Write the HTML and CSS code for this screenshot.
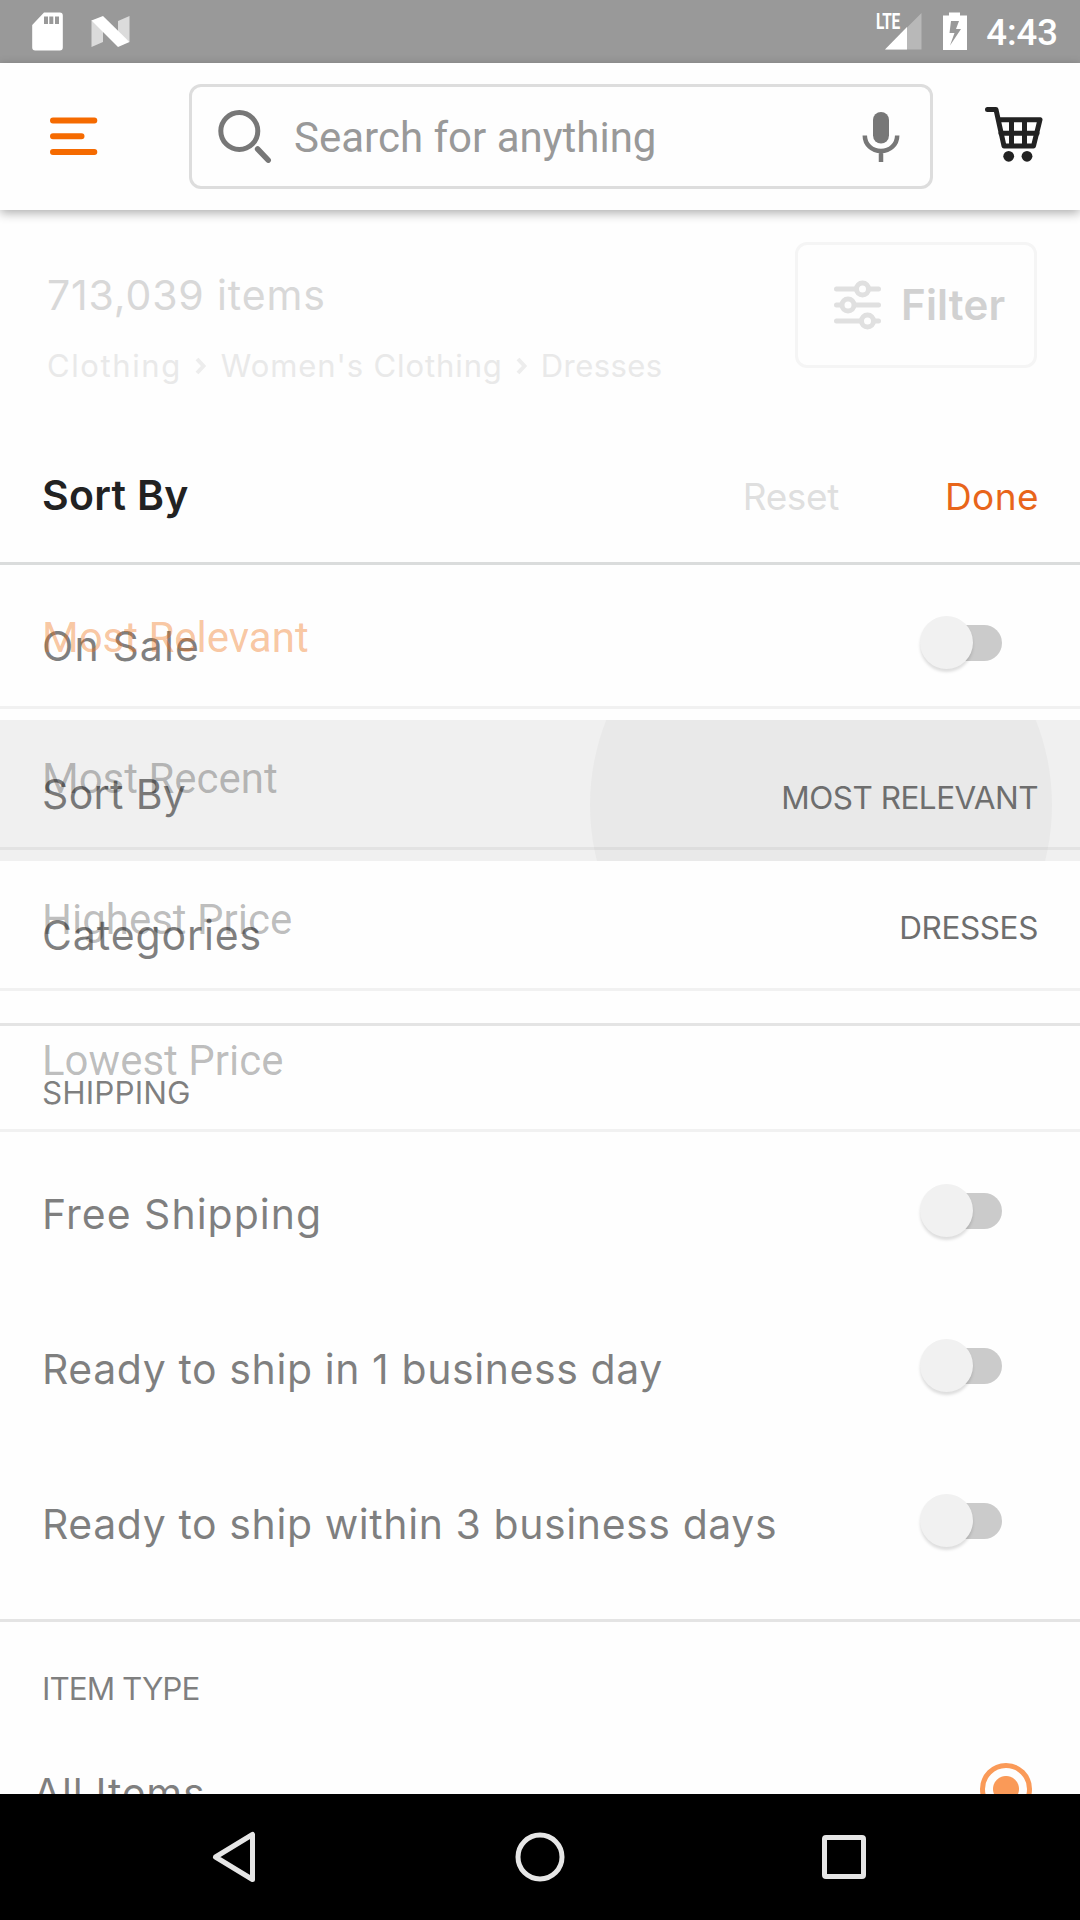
FILE: index.html
```html
<!DOCTYPE html>
<html lang="en">
<head>
<meta charset="utf-8">
<title>Dresses</title>
<link rel="stylesheet" href="styles.css">
</head>
<body>
<div class="phone">
  <div class="status-bar">
    <svg class="status-left" width="110" height="63" viewBox="0 0 110 63">
      <path fill="#fff" fill-rule="evenodd" d="M14 12.500h15.800a3 3 0 0 1 3 3v32a3 3 0 0 1-3 3h-24.600a3 3 0 0 1-3-3V25zM14 16.500v7.500h4v-7.500zM19.300 16.500v7.500h4v-7.500zM25 16.500v7.500h4v-7.500z"/>
      <path fill="#dbdbdb" d="M61.500 20l11.500 10v12L61.500 47zM99.500 16L88 21v13L99.500 42z"/>
      <path fill="#fff" d="M61.500 20.500l11.500-4.500L99.500 42l-11.500 5z"/>
    </svg>
    <div class="status-right">
      <span class="lte">LTE</span>
      <svg width="90" height="63" viewBox="0 0 90 63">
        <path fill="#b8b8b8" d="M39.500 13v36.500H3z"/>
        <path fill="#fff" d="M25 27v22.500H3z"/>
        <path fill="#fff" fill-rule="evenodd" d="M67 12.500h11V15.500h7V50H61V15.500h6zM69 21L67.500 33h5L68 45.500l11-16.500H74l3-8z"/>
      </svg>
      <span class="clock">4:43</span>
    </div>
  </div>

  <header class="app-bar">
    <svg class="menu" width="48" height="40" viewBox="0 0 48 40" stroke="#f56a00" stroke-width="6" stroke-linecap="round"><path d="M3 4.500H44.300M3 20.300H31.500M3 36H44.300"/></svg>
    <div class="search">
      <svg width="56" height="58" viewBox="0 0 56 58" fill="none" stroke="#777" stroke-linecap="round"><circle cx="23.300" cy="23" r="18.500" stroke-width="5"/><path stroke-width="5.500" d="M41.600 41l10.600 11.200"/></svg>
      <span class="search-hint">Search for anything</span>
      <svg class="mic" width="38" height="52" viewBox="0 0 38 52"><rect x="11" y="1" width="16" height="31.500" rx="8" fill="#777"/><path d="M2.800 24.500c0 9 7.200 15.500 16.200 15.500s16.200-6.500 16.200-15.500M19 40v11" fill="none" stroke="#777" stroke-width="4.500"/></svg>
    </div>
    <svg class="cart" width="60" height="58" viewBox="0 0 60 58" fill="none" stroke="#222" stroke-width="5" stroke-linejoin="round" stroke-linecap="round"><path d="M4.500 3.500h8.500l8 36.500h29.500L57 13.700H16"/><path d="M18 27.300h36M28.500 15v24M41.500 15v24"/><g fill="#222" stroke="none"><circle cx="25.700" cy="50.300" r="5.400"/><circle cx="44" cy="50.300" r="5.400"/></g></svg>
  </header>

  <main class="content">
    <section class="results">
      <div class="summary">
        <div class="count">713,039 items</div>
        <div class="crumbs">
          <span class="crumb-root">Clothing</span>
          <svg width="14" height="22" viewBox="0 0 14 22"><path d="M3 4l6.500 7L3 18"/></svg>
          <span class="crumb-parent">Women's Clothing</span>
          <svg width="14" height="22" viewBox="0 0 14 22"><path d="M3 4l6.500 7L3 18"/></svg>
          <span class="crumb-current">Dresses</span>
        </div>
      </div>
      <div class="filter-button">
        <svg width="48" height="52" viewBox="0 0 48 52" stroke="#e0e0e0" stroke-width="5" stroke-linecap="round" fill="#fefefe"><path d="M2.500 10H44.500M2.500 26H44.500M2.500 42H44.500"/><circle cx="28.500" cy="10" r="6"/><circle cx="14" cy="26" r="6"/><circle cx="33.500" cy="42" r="6"/></svg>
        <span>Filter</span>
      </div>
    </section>

    <div class="sheet-head">
      <span class="sheet-title">Sort By</span>
      <span class="reset">Reset</span>
      <span class="done">Done</span>
    </div>

    <div class="panels">
      <div class="filters">
        <div class="row"><span class="label on-sale">On Sale</span><span class="toggle"></span></div>
        <div class="row pressed"><span class="ripple"></span><span class="label sort-by">Sort By</span><span class="value relevant">MOST RELEVANT</span></div>
        <div class="row categories"><span class="label">Categories</span><span class="value dresses">DRESSES</span></div>
        <div class="group-title shipping">SHIPPING</div>
        <div class="row"><span class="label free">Free Shipping</span><span class="toggle"></span></div>
        <div class="row"><span class="label">Ready to ship in 1 business day</span><span class="toggle"></span></div>
        <div class="row"><span class="label">Ready to ship within 3 business days</span><span class="toggle"></span></div>
        <div class="group-title item-type">ITEM TYPE</div>
        <div class="row radio-row"><span class="label all">All Items</span><span class="radio"></span></div>
      </div>
      <div class="sort-options">
        <div class="option selected">Most Relevant</div>
        <div class="option">Most Recent</div>
        <div class="option">Highest Price</div>
        <div class="option">Lowest Price</div>
      </div>
    </div>
  </main>

  <nav class="nav-bar">
    <svg width="50" height="54" viewBox="0 0 50 54"><path d="M43.500 4.500v45L6.500 27z"/></svg>
    <svg width="50" height="50" viewBox="0 0 50 50"><circle cx="25" cy="25" r="22"/></svg>
    <svg width="46" height="46" viewBox="0 0 46 46"><rect x="3.500" y="3.500" width="39" height="39" rx="1.500"/></svg>
  </nav>
</div>
</body>
</html>
```
FILE: styles.css
```css
* { box-sizing: border-box; }
body { margin: 0; background: #fefefe; }
svg { display: block; flex: none; }

.phone {
  width: 1080px;
  height: 1920px;
  display: flex;
  flex-direction: column;
  overflow: hidden;
  font-family: Inter, "Liberation Sans", sans-serif;
  white-space: nowrap;
}

.status-bar {
  flex: none;
  height: 63px;
  background: #999;
  color: #fff;
  display: flex;
  justify-content: space-between;
  padding: 0 22px 0 30px;
  font-family: Roboto, sans-serif;
}
.status-right { display: flex; }
.lte {
  width: 6px;
  padding-top: 11px;
  font-size: 22px;
  line-height: 22px;
  font-weight: 700;
  letter-spacing: -0.5px;
  transform: scaleX(0.7);
  transform-origin: 0 0;
}
.clock {
  margin-left: 14px;
  font-size: 36.5px;
  line-height: 66px;
  font-weight: 500;
}

.app-bar {
  position: relative;
  z-index: 2;
  flex: none;
  height: 147px;
  background: #fefefe;
  box-shadow: 0 3px 10px rgba(0, 0, 0, 0.32);
  display: flex;
  padding: 21px 37px 0 50px;
}
.menu { margin-top: 32px; }
.search {
  flex: none;
  width: 744px;
  height: 105px;
  margin-left: 91px;
  border: 3px solid #ddd;
  border-radius: 12px;
  display: flex;
  align-items: center;
  padding: 0 30px 0 24px;
}
.search-hint {
  flex: 1;
  margin-left: 22px;
  font: 42px/60px Roboto, sans-serif;
  color: #999;
  padding-top: 3px;
}
.cart { margin: 22px 0 0 50px; }

.content {
  flex: 1;
  min-height: 0;
  overflow: hidden;
  background: #fefefe;
}
.results {
  height: 217px;
  display: flex;
  justify-content: space-between;
  padding: 32px 43px 0 47px;
}
.count {
  padding-top: 23px;
  font-size: 41px;
  line-height: 60px;
  letter-spacing: 0.85px;
  color: #d8d8d8;
}
.crumbs {
  display: flex;
  align-items: center;
  margin-top: 21px;
  font-size: 31px;
  line-height: 40px;
  color: #e9e9e9;
}
.crumbs svg { fill: none; stroke: #ededed; stroke-width: 4; }
.crumb-root { letter-spacing: 1.6px; margin-right: 12px; }
.crumb-parent { letter-spacing: 0.9px; margin: 0 12px 0 13px; }
.crumb-current { letter-spacing: 0.43px; margin-left: 12px; }
.filter-button {
  width: 242px;
  height: 126px;
  border: 3px solid #f5f5f5;
  border-radius: 12px;
  display: flex;
  align-items: center;
  padding-left: 36px;
  font-size: 42px;
  font-weight: 600;
  letter-spacing: 0.19px;
  color: #d1d1d1;
}
.filter-button span { margin: -2px 0 0 19px; }

.sheet-head {
  height: 138px;
  border-bottom: 3px solid #dadcdc;
  display: flex;
  align-items: center;
  padding: 0 41px 0 42px;
  font-size: 37px;
}
.sheet-title {
  flex: 1;
  font-size: 41px;
  font-weight: 600;
  letter-spacing: 0.3px;
  color: #222;
}
.reset { color: #dfdfdf; letter-spacing: -0.36px; padding-top: 4px; margin-right: 106px; }
.done { color: #e8651a; letter-spacing: 0.42px; padding-top: 4px; }

.panels { position: relative; }

.row {
  position: relative;
  height: 155px;
  display: flex;
  align-items: center;
  justify-content: space-between;
  padding: 0 42px;
}
.label {
  position: relative;
  padding-top: 6px;
  font-size: 41px;
  line-height: 60px;
  letter-spacing: 0.58px;
  color: rgba(0, 0, 0, 0.5);
}
.on-sale { letter-spacing: 1.1px; }
.sort-by { letter-spacing: 0.35px; }
.free { letter-spacing: 1px; }
.value {
  position: relative;
  font-size: 31.5px;
  line-height: 40px;
  letter-spacing: -0.5px;
  color: #6e6e6e;
}
.pressed { height: 141px; background: #f0f0f0; overflow: hidden; }
.pressed .value { padding-top: 15px; }
.ripple {
  position: absolute;
  left: 590px;
  top: -146px;
  width: 462px;
  height: 462px;
  border-radius: 50%;
  background: #e9e9e9;
}
.categories { height: 141px; }
.categories .label { letter-spacing: 0.89px; padding-top: 7px; }
.dresses { letter-spacing: -0.38px; margin-top: -8px; }

.group-title {
  height: 110px;
  margin-top: 21px;
  border-top: 3px solid #e4e4e4;
  padding: 47px 42px 0;
  font-size: 31.5px;
  line-height: 40px;
  color: rgba(0, 0, 0, 0.5);
}
.shipping { letter-spacing: 0.07px; }
.item-type { letter-spacing: -1px; }
.radio-row { height: 120px; padding: 0 48px 0 33px; }
.radio-row .label { padding-top: 8px; letter-spacing: 0.73px; }

.toggle {
  width: 79px;
  height: 36px;
  margin-right: 36px;
  border-radius: 18px;
  background: #cbcbcb;
  position: relative;
}
.toggle::before {
  content: "";
  position: absolute;
  left: -3px;
  top: -9px;
  width: 53px;
  height: 53px;
  border-radius: 50%;
  background: #f1f1f1;
  box-shadow: 0 3px 3px rgba(0, 0, 0, 0.13);
}
.radio {
  width: 52px;
  height: 52px;
  border: 5.5px solid #fa9a58;
  border-radius: 50%;
  background: radial-gradient(circle, #fa9a58 12.5px, transparent 13.5px);
}

.sort-options {
  position: absolute;
  left: 0;
  right: 0;
  top: 0;
  padding-top: 3px;
  font: 42px/60px Roboto, sans-serif;
  color: rgba(0, 0, 0, 0.26);
}
.option {
  height: 141px;
  padding: 40px 42px 0;
  border-bottom: 3px solid rgba(0, 0, 0, 0.05);
}
.selected { color: rgba(240, 112, 16, 0.4); }

.nav-bar {
  position: relative;
  z-index: 2;
  flex: none;
  height: 126px;
  background: #000;
  display: flex;
  align-items: center;
  justify-content: space-between;
  padding: 0 213px 0 209px;
}
.nav-bar svg { fill: none; stroke: #e6e6e6; stroke-width: 5; stroke-linejoin: round; }
```
